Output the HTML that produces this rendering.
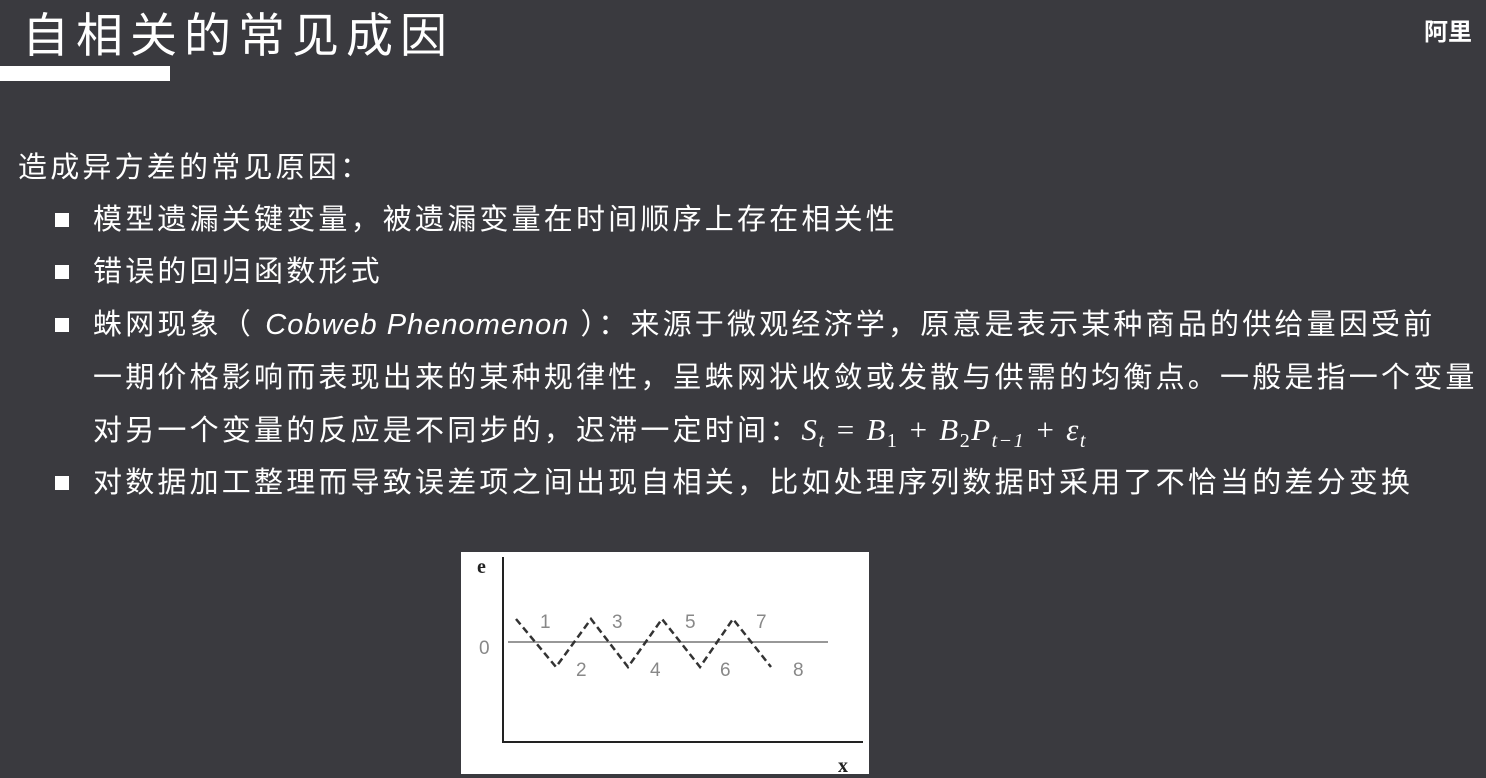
<!DOCTYPE html>
<html><head><meta charset="utf-8"><style>
html,body{margin:0;padding:0;}
body{width:1486px;height:778px;background:#3a3a3f;position:relative;overflow:hidden;font-family:"Liberation Sans","Noto Sans CJK SC",sans-serif;color:#fff;}
.t{position:absolute;white-space:nowrap;font-size:29px;letter-spacing:3.2px;line-height:36px;}
.b{position:absolute;left:55px;width:14px;height:14px;background:#fff;}
.m{font-family:"Liberation Serif",serif;font-style:italic;letter-spacing:1.5px;font-size:31px;}
.m sub{font-size:20px;}
</style></head><body>
<div style="position:absolute;left:22px;top:8px;font-size:47px;line-height:56px;letter-spacing:7px;">自相关的常见成因</div>
<div style="position:absolute;left:0;top:66px;width:170px;height:15px;background:#fff;"></div>
<div style="position:absolute;left:1424px;top:12px;font-size:24px;font-weight:bold;">阿里</div>

<div class="t" style="left:18px;top:150px;">造成异方差的常见原因：</div>
<div class="b" style="top:213px"></div>
<div class="t" style="left:93px;top:202px;">模型遗漏关键变量，被遗漏变量在时间顺序上存在相关性</div>
<div class="b" style="top:265px"></div>
<div class="t" style="left:93px;top:254px;">错误的回归函数形式</div>
<div class="b" style="top:318px"></div>
<div class="t" style="left:93px;top:307px;">蛛网现象（ <i style="letter-spacing:1px">Cobweb Phenomenon</i> ）：来源于微观经济学，原意是表示某种商品的供给量因受前</div>
<div class="t" style="left:93px;top:360px;">一期价格影响而表现出来的某种规律性，呈蛛网状收敛或发散与供需的均衡点。一般是指一个变量</div>
<div class="t" style="left:93px;top:412px;">对另一个变量的反应是不同步的，迟滞一定时间：<span class="m">S<sub>t</sub> = B<sub style="font-style:normal">1</sub> + B<sub style="font-style:normal">2</sub>P<sub>t−1</sub> + ε<sub>t</sub></span></div>
<div class="b" style="top:476px"></div>
<div class="t" style="left:93px;top:465px;">对数据加工整理而导致误差项之间出现自相关，比如处理序列数据时采用了不恰当的差分变换</div>

<svg style="position:absolute;left:461px;top:552px" width="408" height="222" viewBox="461 552 408 222">
<rect x="461" y="552" width="408" height="222" fill="#fff"/>
<g font-family="Liberation Serif,serif" fill="#222" font-weight="bold" font-size="20"><text x="477" y="573">e</text><text x="838" y="772">x</text></g>
<path d="M503 557V742H863" stroke="#222" stroke-width="2" fill="none"/>
<path d="M508 642H828" stroke="#777" stroke-width="1.5"/>
<path d="M516 619L556 667L591 619L628 667L662 619L700 667L733 619L771 667" stroke="#333" stroke-width="2.5" stroke-dasharray="7,4" fill="none"/>
<g fill="#888" font-family="Liberation Sans,sans-serif" font-size="19"><text x="479" y="654">0</text><text x="540" y="628">1</text><text x="576" y="676">2</text><text x="612" y="628">3</text><text x="650" y="676">4</text><text x="685" y="628">5</text><text x="720" y="676">6</text><text x="756" y="628">7</text><text x="793" y="676">8</text></g>
</svg>
</body></html>
